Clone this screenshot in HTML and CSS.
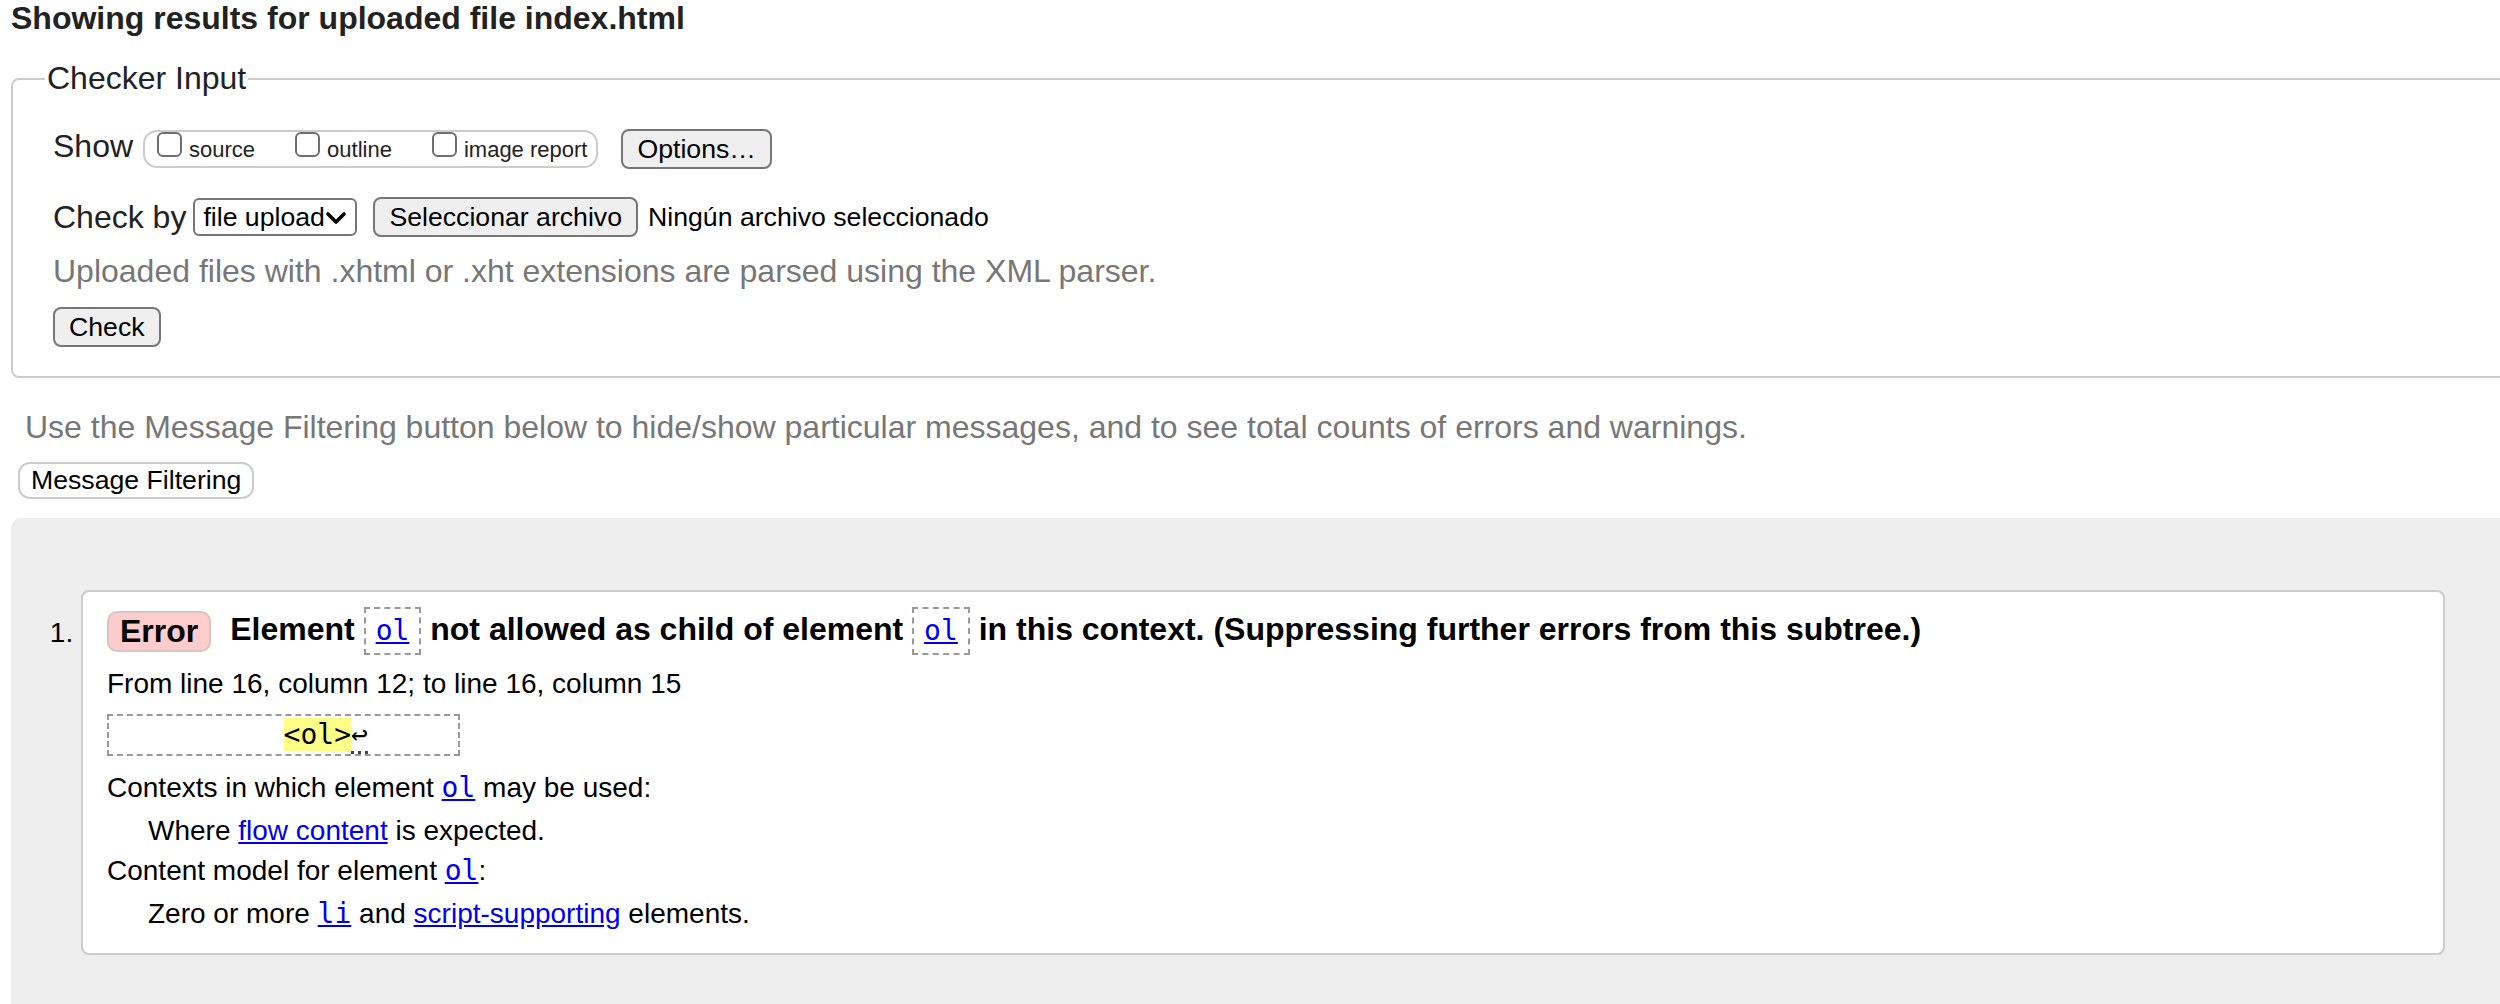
FILE: index.html
```html
<!DOCTYPE html>
<html lang="en">
<head>
<meta charset="utf-8">
<title>Showing results for index.html - Nu Html Checker</title>
<link rel="stylesheet" href="styles.css">
</head>
<body>
<div class="page">
  <h2 class="results-title">Showing results for uploaded file index.html</h2>
  <form class="checker-form">
    <fieldset class="checker">
      <legend class="checker-legend">Checker Input</legend>
      <div class="row row-show">
        <span class="row-label label-show">Show</span>
        <span class="show-group">
          <label class="show-opt"><input type="checkbox" class="cb"><span class="show-text">source</span></label>
          <label class="show-opt"><input type="checkbox" class="cb"><span class="show-text">outline</span></label>
          <label class="show-opt"><input type="checkbox" class="cb"><span class="show-text">image report</span></label>
        </span>
        <button type="button" class="btn btn-options">Options…</button>
      </div>
      <div class="row row-checkby">
        <span class="row-label label-checkby">Check by</span>
        <span class="select-wrap">
          <select class="select"><option>file upload</option></select>
          <svg class="chev" viewBox="0 0 22 14" width="22" height="14" aria-hidden="true"><path d="M3 3 L11 11 L19 3" fill="none" stroke="#000" stroke-width="3.6" stroke-linecap="round" stroke-linejoin="round"/></svg>
        </span>
        <button type="button" class="btn btn-file">Seleccionar archivo</button>
        <span class="file-status">Ningún archivo seleccionado</span>
      </div>
      <p class="hint">Uploaded files with .xhtml or .xht extensions are parsed using the XML parser.</p>
      <div class="row row-submit"><button type="submit" class="btn">Check</button></div>
    </fieldset>
  </form>
  <p class="filter-hint">Use the Message Filtering button below to hide/show particular messages, and to see total counts of errors and warnings.</p>
  <button type="button" class="filter-btn">Message Filtering</button>
  <ol class="messages">
    <li class="msg">
      <div class="msg-head"><span class="badge">Error</span><span class="msg-text">Element <code class="boxed"><a href="#">ol</a></code> not allowed as child of element <code class="boxed"><a href="#">ol</a></code> in this context. (Suppressing further errors from this subtree.)</span></div>
      <p class="location">From line 16, column 12; to line 16, column 15</p>
      <p class="extract"><code class="extract-code">          <b class="hl">&lt;ol&gt;</b><span class="lf">↩</span>     </code></p>
      <dl class="ctx">
        <dt>Contexts in which element <a href="#"><code class="mono">ol</code></a> may be used:</dt>
        <dd>Where <a href="#">flow content</a> is expected.</dd>
        <dt>Content model for element <a href="#"><code class="mono">ol</code></a>:</dt>
        <dd>Zero or more <a href="#"><code class="mono">li</code></a> and <a href="#">script-supporting</a> elements.</dd>
      </dl>
    </li>
  </ol>
</div>
</body>
</html>
```

FILE: styles.css
```css
html {
  overflow: hidden;
}

body {
  margin: 0;
  font-family: "Liberation Sans", Arial, Helvetica, sans-serif;
  color: #222;
  background: #fff;
}

.page {
  width: 2504px;
  padding: 0 11px;
}

.results-title {
  margin: 0;
  font-size: 32px;
  line-height: 37px;
  font-weight: bold;
}

.checker-form {
  margin: 0;
}

.checker {
  margin: 23px 0 0;
  padding: 32px 0 29px 32px;
  border: 2px solid #ccc;
  border-radius: 8px;
  min-width: 0;
}

.checker-legend {
  padding: 0 2px;
  font-size: 32px;
  line-height: 37px;
}

.row {
  display: flex;
  align-items: center;
  margin-left: 8px;
  height: 40px;
}

.row-label {
  font-size: 32px;
  line-height: 37px;
}

.label-show {
  margin-right: 10px;
  margin-bottom: 5px;
}

.label-checkby {
  margin-right: 7px;
}

.show-group {
  display: flex;
  align-items: flex-start;
  gap: 40px;
  box-sizing: border-box;
  height: 38px;
  padding: 0 9px 0 12px;
  border: 2px solid #ccc;
  border-radius: 14px;
}

.show-opt {
  display: flex;
  align-items: flex-start;
}

.cb {
  appearance: none;
  -webkit-appearance: none;
  box-sizing: border-box;
  width: 25px;
  height: 25px;
  margin: 0;
  border: 2px solid #6e6e6e;
  border-radius: 6px;
  background: #fff;
}

.show-text {
  margin: 5px 0 0 7px;
  font-size: 22px;
  line-height: 25px;
}

.btn {
  font-family: "Liberation Sans", Arial, Helvetica, sans-serif;
  font-size: 26.67px;
  line-height: 32px;
  padding: 2px 14px;
  border: 2px solid #767676;
  border-radius: 8px;
  background: #efefef;
  color: #000;
  margin: 0;
}

.btn-options {
  margin-left: 23px;
}

.row-checkby {
  margin-top: 28px;
}

.select-wrap {
  display: inline-flex;
  align-items: center;
  box-sizing: border-box;
  height: 38px;
  padding: 0 8px;
  border: 2px solid #767676;
  border-radius: 6px;
  background: #fff;
}

.select {
  appearance: none;
  -webkit-appearance: none;
  width: 122px;
  margin: 0;
  padding: 0;
  border: none;
  background: transparent;
  font-family: "Liberation Sans", Arial, Helvetica, sans-serif;
  font-size: 26.67px;
  line-height: 32px;
  color: #000;
}

.chev {
  display: block;
  margin-top: 2px;
}

.btn-file {
  margin-left: 16px;
}

.file-status {
  margin-left: 10px;
  font-size: 26.67px;
  color: #000;
}

.hint {
  margin: 16px 0 0 8px;
  font-size: 32px;
  line-height: 37px;
  color: #777;
}

.row-submit {
  margin-top: 17px;
}

.filter-hint {
  margin: 31px 0 0 14px;
  font-size: 32px;
  line-height: 37px;
  color: #777;
}

.filter-btn {
  display: block;
  margin: 16px 0 0 7px;
  padding: 1px 11px;
  font-family: "Liberation Sans", Arial, Helvetica, sans-serif;
  font-size: 26.67px;
  line-height: 31px;
  border: 2px solid #ccc;
  border-radius: 12px;
  background: #fff;
  color: #000;
}

.messages {
  margin: 19px 0 0;
  padding: 72px 70px 72px 70px;
  background: #eee;
  border-radius: 10px;
  font-size: 28px;
  color: #000;
}

.msg {
  background: #fff;
  border: 2px solid #ccc;
  border-radius: 8px;
  padding: 15px 24px 23px;
}

.msg-head {
  display: flex;
  align-items: center;
}

.badge {
  display: inline-block;
  padding: 0 11px;
  font-size: 32px;
  line-height: 37px;
  font-weight: bold;
  background: #fcc;
  border: 2px solid #d9c4c4;
  border-radius: 10px;
}

.msg-text {
  margin-left: 19px;
  font-size: 32px;
  font-weight: bold;
}

.boxed {
  display: inline-block;
  padding: 5px 10px;
  border: 2px dashed #999;
  font-family: "DejaVu Sans Mono", "Liberation Mono", monospace;
  font-size: 28px;
  font-weight: normal;
  line-height: 34px;
}

a {
  color: #00e;
  text-decoration: underline;
}

.mono {
  font-family: "DejaVu Sans Mono", "Liberation Mono", monospace;
  font-size: 28px;
}

.location {
  margin: 13px 0 0;
  line-height: 32px;
}

.extract {
  margin: 14px 0 0;
}

.extract-code {
  display: inline-block;
  padding: 2px 6px;
  border: 2px dashed #999;
  font-family: "DejaVu Sans Mono", "Liberation Mono", monospace;
  font-size: 28px;
  line-height: 34px;
  white-space: pre;
}

.hl {
  font-weight: normal;
  background: #ff8;
}

.lf {
  border-bottom: 3px dotted #444;
}

.ctx {
  margin: 16px 0 0;
  line-height: 32px;
}

.ctx dt {
  margin: 0;
}

.ctx dd {
  margin: 11px 0 0 41px;
}

.ctx dd + dt {
  margin-top: 8px;
}
```
